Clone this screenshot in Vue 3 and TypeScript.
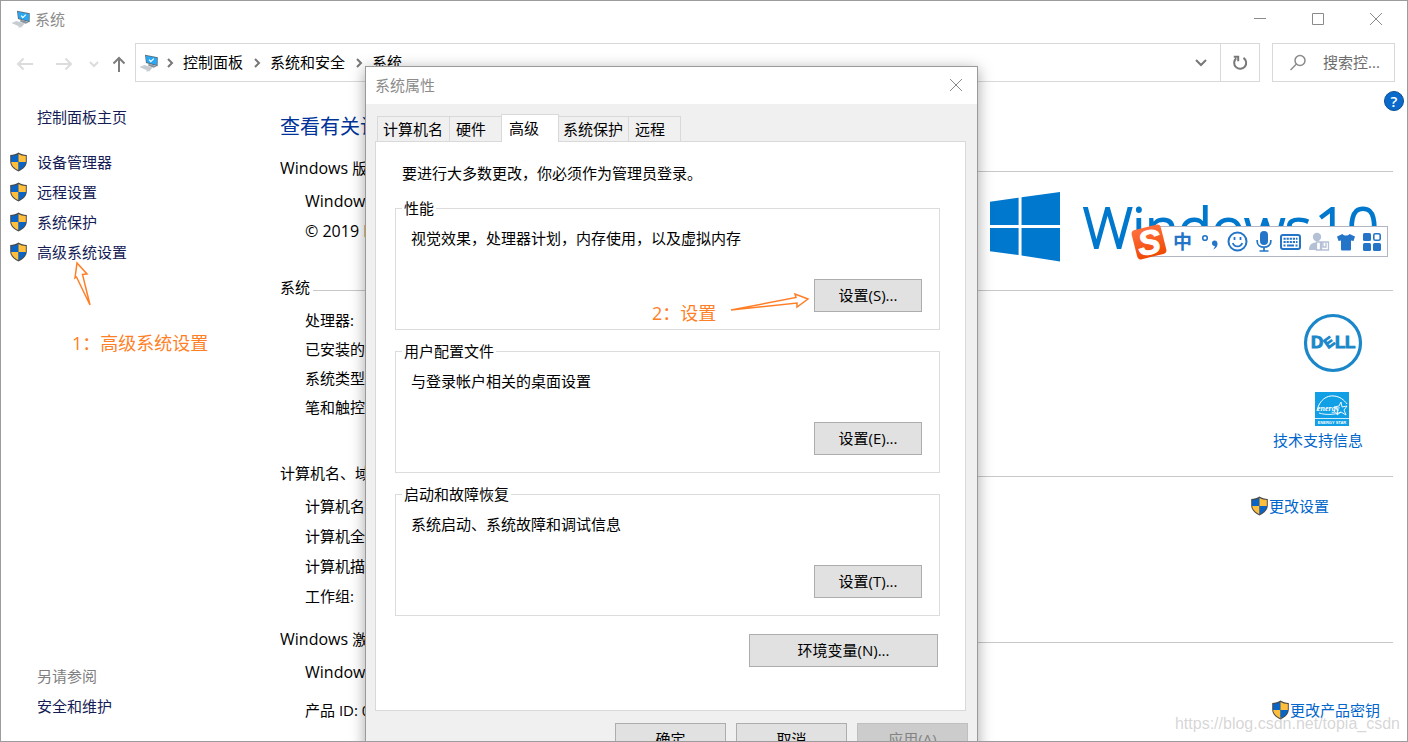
<script setup lang="ts">
import { ref } from 'vue'

interface Line {
  latin?: string
  text?: string
}

interface Section {
  id: string
  title: Line
  rows: Line[]
}

interface Group {
  title: string
  text: string
  button: string
}

const tasks: string[] = ['设备管理器', '远程设置', '系统保护', '高级系统设置']
const crumbs: string[] = ['控制面板', '系统和安全', '系统']

const sections: Section[] = [
  {
    id: 'edition',
    title: { latin: 'Windows ', text: '版本' },
    rows: [{ latin: 'Windows 10' }, { latin: '© 2019 Microsoft' }],
  },
  {
    id: 'system',
    title: { text: '系统' },
    rows: [{ text: '处理器:' }, { text: '已安装的内存' }, { text: '系统类型:' }, { text: '笔和触控:' }],
  },
  {
    id: 'name',
    title: { text: '计算机名、域' },
    rows: [{ text: '计算机名:' }, { text: '计算机全名:' }, { text: '计算机描述:' }, { text: '工作组:' }],
  },
  {
    id: 'activation',
    title: { latin: 'Windows ', text: '激活' },
    rows: [{ latin: 'Windows ', text: '已激活' }, { text: '产品 ID: 00' }],
  },
]

const tabs: string[] = ['计算机名', '硬件', '高级', '系统保护', '远程']
const activeTab = ref<string>('高级')

const groups: Group[] = [
  { title: '性能', text: '视觉效果，处理器计划，内存使用，以及虚拟内存', button: '设置(S)...' },
  { title: '用户配置文件', text: '与登录帐户相关的桌面设置', button: '设置(E)...' },
  { title: '启动和故障恢复', text: '系统启动、系统故障和调试信息', button: '设置(T)...' },
]

const query = ref<string>('')
</script>

<template>
  <div class="screen" lang="zh-CN">
    <svg class="defs" width="0" height="0" aria-hidden="true">
      <symbol id="shield" viewBox="0 0 18 20">
        <path d="M9 .6C6.700 2 3.800 2.900.7 3v6.200c0 4.700 3.300 7.900 8.300 10.200 5-2.300 8.300-5.500 8.300-10.200V3C14.200 2.900 11.300 2 9 .6z" fill="#4a4a4a" />
        <path d="M9 1.900v8H1.700V4C4.500 3.800 7 3.100 9 1.900z" fill="#0a64c4" />
        <path d="M9 1.900v8h7.300V4C13.500 3.800 11 3.100 9 1.900z" fill="#ffbf3d" />
        <path d="M9 9.900v8.300c-4.200-2-7-4.700-7.300-8.300z" fill="#ffbf3d" />
        <path d="M9 9.900v8.300c4.200-2 7-4.700 7.300-8.300z" fill="#0a64c4" />
      </symbol>
      <symbol id="computer" viewBox="0 0 20 18">
        <path d="M6 .8l12.800 2.400-.2 9L7 9z" fill="#5d6b78" />
        <path d="M6.800 1.700L18 3.900l-.2 7.200L7.700 8.200z" fill="#29a8f3" />
        <path d="M10.200 5.600l1.600 2 3-3" fill="none" stroke="#fff" stroke-width="1.200" />
        <path d="M9.500 9.800l4.500 1.300 3.800 1.400-3.200 1.200-5.400-2z" fill="#8a949c" />
        <path d="M.5 12.900l5-1.900 8 2.500-3 3.700-3.400.2.600-1.200z" fill="#c9ced3" />
        <path d="M1.500 13l10 2M4 12l8.500 2.200" stroke="#c0c5ca" stroke-width=".3" />
      </symbol>
    </svg>

    <header class="titlebar">
      <svg class="app-icon"><use href="#computer" /></svg>
      <span class="window-title">系统</span>
      <div class="window-buttons">
        <button type="button" aria-label="最小化">
          <svg width="14" height="14" viewBox="0 0 14 14"><path d="M1 6.500h12" /></svg>
        </button>
        <button type="button" aria-label="最大化">
          <svg width="14" height="14" viewBox="0 0 14 14"><path d="M1.500 1.500h11v11h-11z" /></svg>
        </button>
        <button type="button" aria-label="关闭">
          <svg width="14" height="14" viewBox="0 0 14 14"><path d="M1 1l12 12M13 1L1 13" /></svg>
        </button>
      </div>
    </header>

    <nav class="toolbar" aria-label="导航">
      <div class="history">
        <button type="button" class="faint" aria-label="后退">
          <svg width="18" height="14" viewBox="0 0 18 14"><path d="M17 7H2M7.500 1.500L2 7l5.500 5.500" /></svg>
        </button>
        <button type="button" class="faint forward" aria-label="前进">
          <svg width="18" height="14" viewBox="0 0 18 14"><path d="M1 7h15M10.500 1.500L16 7l-5.500 5.500" /></svg>
        </button>
        <button type="button" class="faint recent" aria-label="最近位置">
          <svg width="10" height="8" viewBox="0 0 10 8"><path d="M1 2l4 4 4-4" /></svg>
        </button>
        <button type="button" class="up" aria-label="向上">
          <svg width="14" height="18" viewBox="0 0 14 18"><path d="M7 17V3M1.500 8.500L7 3l5.500 5.500" /></svg>
        </button>
      </div>
      <div class="address">
        <svg class="app-icon"><use href="#computer" /></svg>
        <template v-for="c in crumbs" :key="c">
          <svg class="sep" width="8" height="10" viewBox="0 0 8 10"><path d="M2 1l4 4-4 4" /></svg>
          <a href="#">{{ c }}</a>
        </template>
        <button type="button" class="drop" aria-label="历史记录">
          <svg width="12" height="8" viewBox="0 0 12 8"><path d="M1 1l5 5 5-5" /></svg>
        </button>
        <button type="button" class="refresh" aria-label="刷新">
          <svg width="16" height="16" viewBox="0 0 16 16"><path d="M11.500 2.800A6 6 0 1 1 4.200 3.300M1.800 1.800h4.400v4.400" /></svg>
        </button>
      </div>
      <label class="search">
        <svg width="18" height="18" viewBox="0 0 18 18"><circle cx="11" cy="6.500" r="5" /><path d="M7.500 10L1.500 16" /></svg>
        <input v-model="query" type="text" placeholder="搜索控..." aria-label="搜索控制面板" />
      </label>
    </nav>

    <div class="body">
      <aside class="side">
        <a class="home" href="#">控制面板主页</a>
        <a v-for="t in tasks" :key="t" class="task" href="#">
          <svg class="shield"><use href="#shield" /></svg>{{ t }}
        </a>
        <div class="see-also">
          <span>另请参阅</span>
          <a href="#">安全和维护</a>
        </div>
      </aside>

      <main class="content">
        <h1>查看有关计算机</h1>
        <section v-for="s in sections" :key="s.id" :class="s.id">
          <h2><span><span class="latin">{{ s.title.latin }}</span>{{ s.title.text }}</span></h2>
          <div class="section-body">
            <ul>
              <li v-for="(r, i) in s.rows" :key="i"><span class="latin">{{ r.latin }}</span>{{ r.text }}</li>
            </ul>
            <div v-if="s.id === 'edition'" class="brand">
              <svg width="70" height="71" viewBox="0 0 71 71">
                <path d="M0 10.500L29 6.300V34H0zM32 5.800L71 .4V34H32zM0 37h29v27.500L0 60.500zM32 37h39v34L32 65z" fill="#0078cd" />
              </svg>
              <span class="wordmark"><span>Windows</span><span>10</span></span>
            </div>
            <div v-else-if="s.id === 'system'" class="vendor">
              <svg width="60" height="60" viewBox="0 0 60 60" role="img" aria-label="Dell">
                <circle cx="30" cy="30" r="27.500" fill="none" stroke="#1b87c9" stroke-width="3.200" />
                <g class="dell">
                  <text x="8" y="35">D</text>
                  <text class="tilted" x="21" y="34" transform="rotate(-36 26 29)">E</text>
                  <text x="32" y="35">L</text>
                  <text x="42" y="35">L</text>
                </g>
              </svg>
              <svg class="star" width="34" height="34" viewBox="0 0 34 34">
                <path d="M0 0h34v34H0z" fill="#11a0e6" />
                <path d="M2 19C4 8 12 3 19 4c6 .5 10 4 13 8" fill="none" stroke="#fff" />
                <path d="M26 10l1 5 5-1-3 4 2 5-5-3-4 3 1-5-4-3 5-1zM4 21c6 2 16 2 22-1" fill="none" stroke="#fff" stroke-width=".9" />
                <text class="script" x="2" y="19">energy</text>
                <path d="M0 26.500h34" stroke="#fff" stroke-width=".8" />
                <text class="caption" x="17" y="32" text-anchor="middle">ENERGY STAR</text>
              </svg>
              <a href="#">技术支持信息</a>
            </div>
            <a v-else-if="s.id === 'name'" class="action" href="#">
              <svg class="shield"><use href="#shield" /></svg>更改设置
            </a>
            <a v-else class="action" href="#">
              <svg class="shield"><use href="#shield" /></svg>更改产品密钥
            </a>
          </div>
        </section>
      </main>
    </div>

    <button type="button" class="help" aria-label="帮助">?</button>

    <div class="ime">
      <svg class="sogou" width="38" height="38" viewBox="0 0 38 38">
        <defs>
          <linearGradient id="flame" x1="0" y1="0" x2="0" y2="1">
            <stop offset="0" stop-color="#ff6f3d" />
            <stop offset="1" stop-color="#f04a05" />
          </linearGradient>
        </defs>
        <rect x="4" y="4" width="30" height="30" rx="4" fill="url(#flame)" transform="rotate(-14 19 19)" />
        <text x="19" y="31" text-anchor="middle" transform="rotate(-8 19 19)">S</text>
      </svg>
      <button type="button" class="zh">中</button>
      <button type="button" aria-label="标点">
        <svg width="20" height="20" viewBox="0 0 20 20"><circle cx="5" cy="6" r="2.300" fill="none" stroke="#2475c8" stroke-width="1.600" /><path d="M14.500 8.500c2.300 0 3.500 1.800 2.900 4.500-.5 2.300-2 3.700-4.200 4.500 1.100-1.400 1.600-2.300 1.600-3.500-3.600.2-3.800-5.500-.3-5.500z" fill="#2475c8" /></svg>
      </button>
      <button type="button" aria-label="表情">
        <svg width="21" height="21" viewBox="0 0 21 21" fill="none" stroke="#2475c8" stroke-width="2"><circle cx="10.500" cy="10.500" r="9" /><path d="M5.800 12c1.500 4.600 7.900 4.600 9.400 0M7.500 6v3M13.500 6v3" stroke-width="1.800" /></svg>
      </button>
      <button type="button" aria-label="语音">
        <svg width="16" height="21" viewBox="0 0 16 21"><rect x="4" y="0" width="8" height="14" rx="4" fill="#2475c8" /><path d="M1.200 9v1.500c0 7.500 13.600 7.500 13.600 0V9M8 16v4M3.500 20h9" fill="none" stroke="#2475c8" stroke-width="1.700" /></svg>
      </button>
      <button type="button" aria-label="软键盘">
        <svg width="21" height="16" viewBox="0 0 21 16"><rect x="1" y="1" width="19" height="14" rx="2" fill="none" stroke="#2475c8" stroke-width="2" /><path d="M3.500 4.800h14M3.500 8h14" stroke="#2475c8" stroke-width="2" stroke-dasharray="2.200 .9" /><path d="M3.500 11.500h2M7 11.500h7M15.500 11.500h2" stroke="#2475c8" stroke-width="2" /></svg>
      </button>
      <button type="button" aria-label="用户">
        <svg width="21" height="20" viewBox="0 0 21 20"><circle cx="8" cy="5" r="4.200" fill="#b4c0d6" /><path d="M0 18c0-5 2-7.500 8-7.500V18z" fill="#b4c0d6" /><path d="M7.500 10h4v8h-4zM12.500 10h7v8h-7zM14 10v5h3v-4" fill="#fff" stroke="#b4c0d6" stroke-width="1.300" /></svg>
      </button>
      <button type="button" aria-label="皮肤">
        <svg width="18" height="18" viewBox="0 0 18 18"><path d="M5.500 1c1.500 2 5.500 2 7 0L18 3.500 16.500 8 14 7.500V16c0 1-.5 1.500-1.500 1.500h-7C4.500 17.500 4 17 4 16V7.500L1.500 8 0 3.500z" fill="#2475c8" /></svg>
      </button>
      <button type="button" aria-label="工具箱">
        <svg width="18" height="18" viewBox="0 0 18 18"><rect width="8" height="8" rx="1.500" fill="#2475c8" /><rect y="10" width="8" height="8" rx="1.500" fill="#2475c8" /><rect x="10" y="10" width="8" height="8" rx="1.500" fill="#2475c8" /><rect x="10.800" y=".8" width="6.400" height="6.400" rx="1.500" fill="none" stroke="#2475c8" stroke-width="1.600" /></svg>
      </button>
    </div>

    <div class="dialog" role="dialog" aria-labelledby="dialog-title">
      <header>
        <span id="dialog-title">系统属性</span>
        <button type="button" aria-label="关闭对话框">
          <svg width="14" height="14" viewBox="0 0 14 14"><path d="M1 1l12 12M13 1L1 13" /></svg>
        </button>
      </header>
      <div class="tabs" role="tablist">
        <button
          v-for="t in tabs"
          :key="t"
          type="button"
          role="tab"
          :aria-selected="t === activeTab"
          :class="{ active: t === activeTab }"
          @click="activeTab = t"
        >{{ t }}</button>
      </div>
      <div class="panel" role="tabpanel">
        <p class="intro">要进行大多数更改，你必须作为管理员登录。</p>
        <fieldset v-for="g in groups" :key="g.title">
          <legend>{{ g.title }}</legend>
          <p>{{ g.text }}</p>
          <button type="button" class="push">{{ g.button }}</button>
        </fieldset>
        <button type="button" class="push env">环境变量(N)...</button>
      </div>
      <footer>
        <button type="button" class="push">确定</button>
        <button type="button" class="push">取消</button>
        <button type="button" class="push" disabled>应用(A)</button>
      </footer>
    </div>

    <div class="note first">
      <svg width="18" height="48" viewBox="0 0 18 48"><path d="M16 44L2.500 16 1 17 3 2l10 11-4.500.5z" /></svg>
      <span>1：高级系统设置</span>
    </div>
    <div class="note second">
      <span>2：设置</span>
      <svg width="82" height="20" viewBox="0 0 82 20"><path d="M2 17L67 4.500 66 1l13 5-11 8v-4z" /></svg>
    </div>

    <div class="watermark">https://blog.csdn.net/topia_csdn</div>
  </div>
</template>

<style>
body {
  margin: 0;
  background: #fff;
}
</style>

<style scoped>
.screen {
  position: relative;
  box-sizing: border-box;
  min-height: 100vh;
  overflow: hidden;
  display: flex;
  flex-direction: column;
  border: 1px solid #9c9c9c;
  background: #fff;
  color: #000;
  font: 15px/20px "Open Sans", "Noto Sans CJK SC", sans-serif;
}
.defs {
  position: absolute;
}
button {
  margin: 0;
  padding: 0;
  border: 0;
  background: none;
  font: inherit;
  color: inherit;
}
button svg {
  display: block;
}
a {
  color: #0066cc;
  text-decoration: none;
}
h1,
h2,
p,
ul {
  margin: 0;
  padding: 0;
  font-weight: 400;
  list-style: none;
}
.app-icon {
  flex: none;
  width: 20px;
  height: 18px;
}
.shield {
  flex: none;
  width: 19px;
  height: 20px;
}

.titlebar {
  display: flex;
  align-items: center;
  height: 36px;
  padding: 0 2px 0 10px;
  color: #8c8c8c;
}
.window-title {
  margin-left: 4px;
}
.window-buttons {
  display: flex;
  margin-left: auto;
}
.window-buttons button {
  display: grid;
  place-items: center;
  width: 58px;
  height: 36px;
}
.window-buttons svg,
.dialog header svg {
  fill: none;
  stroke: #8a8a8a;
}

.toolbar {
  display: flex;
  align-items: stretch;
  height: 39px;
  margin-top: 6px;
  padding-right: 12px;
}
.history {
  display: flex;
  align-items: center;
  box-sizing: border-box;
  width: 134px;
  padding: 2px 9px 0 15px;
}
.history svg {
  fill: none;
  stroke: #7d7d7d;
  stroke-width: 2;
}
.history .faint svg {
  stroke: #dcdcdc;
}
.forward {
  margin-left: 21px;
}
.recent {
  margin-left: 16px;
}
.up {
  margin-left: auto;
}
.address {
  flex: 1;
  display: flex;
  align-items: center;
  border: 1px solid #d9d9d9;
  padding-left: 3px;
}
.address a {
  padding-bottom: 2px;
  color: #000;
}
.address svg {
  stroke-width: 2;
}
.sep {
  margin: 0 9px 0 7px;
  fill: none;
  stroke: #777;
}
a + .sep {
  margin-left: 10px;
}
.drop,
.refresh {
  display: grid;
  place-items: center;
  align-self: stretch;
  width: 39px;
  fill: none;
  stroke: #777;
}
.drop {
  margin-left: auto;
}
.refresh {
  border-left: 1px solid #d9d9d9;
}
.search {
  display: flex;
  align-items: center;
  box-sizing: border-box;
  width: 123px;
  margin-left: 12px;
  padding-left: 16px;
  border: 1px solid #d9d9d9;
}
.search svg {
  flex: none;
  fill: none;
  stroke: #8a8a8a;
  stroke-width: 1.500;
}
.search input {
  flex: 1;
  min-width: 0;
  margin-left: 16px;
  padding: 0 0 2px;
  border: 0;
  outline: 0;
  background: none;
  font: inherit;
}
.search input::placeholder {
  color: #6d6d6d;
  opacity: 1;
}

.body {
  flex: 1;
  display: flex;
}
.side {
  display: flex;
  flex-direction: column;
  box-sizing: border-box;
  width: 279px;
  padding: 20px 0 20px 8px;
  line-height: 30px;
}
.side a {
  color: #151c55;
}
.home {
  margin: 0 0 15px 28px;
}
.task {
  display: flex;
  align-items: center;
  gap: 9px;
}
.see-also {
  display: flex;
  flex-direction: column;
  margin: auto 0 0 28px;
  color: #7f7f7f;
}
.content {
  flex: 1;
  padding: 31px 14px 0 0;
}
h1 {
  font-size: 20px;
  line-height: 28px;
  color: #003399;
}
h2 {
  display: flex;
  align-items: center;
  gap: 3px;
  font-size: 15px;
  line-height: 24px;
}
h2::after {
  content: "";
  flex: 1;
  height: 1px;
  margin-top: 6px;
  background: #c8c8c8;
}
.latin {
  font-size: 16px;
  line-height: 16px;
}
.section-body {
  display: flex;
  justify-content: space-between;
  padding-left: 25px;
}
.edition {
  margin-top: 15px;
}
.edition .section-body {
  padding-top: 6px;
}
.edition li {
  line-height: 30px;
}
.brand {
  display: flex;
  align-items: center;
  gap: 23px;
  margin-right: 14px;
  padding: 5px 0 13px;
}
.wordmark {
  display: flex;
  gap: 4px;
  color: #0078cd;
  font-size: 56px;
  font-weight: 300;
  line-height: 71px;
  -webkit-text-stroke: 2px #0078cd;
}
.system .section-body {
  padding-top: 7px;
}
.system li {
  line-height: 29px;
}
.vendor {
  display: flex;
  flex-direction: column;
  align-items: flex-end;
  padding: 7px 30px 11px 0;
}
.star {
  margin: 19px 14px 4px 0;
}
.dell {
  fill: #1b87c9;
  stroke: #1b87c9;
  stroke-width: 1;
  font: bold 17px "Liberation Sans", sans-serif;
}
.tilted {
  font-size: 14px;
}
.script {
  fill: #fff;
  font: italic bold 8px "Liberation Serif", serif;
}
.caption {
  fill: #fff;
  font: bold 4px "Liberation Sans", sans-serif;
}
.name .section-body {
  padding-top: 6px;
}
.name li {
  line-height: 30px;
}
.action {
  display: flex;
  align-items: center;
  align-self: flex-start;
  line-height: 30px;
}
.name .action {
  margin-right: 64px;
}
.activation {
  margin-top: 16px;
}
.activation .section-body {
  padding-top: 2px;
}
.activation li {
  line-height: 38px;
}
.activation .action {
  align-self: flex-end;
  margin-right: 13px;
  line-height: 38px;
}

.help {
  position: absolute;
  top: 90px;
  right: 3px;
  box-sizing: border-box;
  width: 20px;
  height: 20px;
  border: 1px solid #0a4f90;
  border-radius: 50%;
  background: #0a6acb;
  color: #fff;
  font-weight: 600;
  line-height: 18px;
}

.ime {
  position: absolute;
  top: 225px;
  right: 19px;
  display: flex;
  align-items: center;
  justify-content: space-between;
  box-sizing: border-box;
  width: 238px;
  height: 31px;
  padding: 0 6px 0 22px;
  border: 1px solid #b3b6c2;
  background: #fff;
}
.sogou {
  position: absolute;
  left: -21px;
  top: -4px;
}
.sogou text {
  fill: #fff;
  stroke: #fff;
  stroke-width: 1;
  font: italic bold 34px "Liberation Sans", sans-serif;
}
.zh {
  color: #2475c8;
  font-size: 19px;
  font-weight: 700;
}

.dialog {
  position: absolute;
  left: 364px;
  top: 65px;
  box-sizing: border-box;
  width: 613px;
  padding-bottom: 12px;
  border: 1px solid #9a9a9a;
  background: #f0f0f0;
  box-shadow: 0 3px 14px rgba(0, 0, 0, 0.35);
}
.dialog header {
  display: flex;
  align-items: center;
  justify-content: space-between;
  box-sizing: border-box;
  height: 37px;
  padding: 0 14px 1px 9px;
  background: #fff;
  color: #8c8c8c;
}
.tabs {
  display: flex;
  align-items: flex-end;
  height: 37px;
  padding-left: 11px;
}
.tabs button {
  box-sizing: border-box;
  height: 25px;
  padding: 0 6px 0 5px;
  border: 1px solid #d9d9d9;
  border-width: 1px 0 0 1px;
  line-height: 24px;
}
.tabs button:nth-child(2) {
  padding: 0 15px 0 6px;
}
.tabs button:nth-child(4) {
  padding: 0 5px 0 4px;
  border-left: 0;
}
.tabs button:nth-child(5) {
  padding: 0 15px 0 6px;
  border-right-width: 1px;
}
.tabs button.active {
  position: relative;
  height: 28px;
  margin-bottom: -1px;
  padding: 0 19px 2px 7px;
  border-width: 1px 1px 0;
  background: #fff;
}
.panel {
  margin: 0 11px 0 9px;
  padding: 21px 25px 43px 19px;
  border: 1px solid #d9d9d9;
  background: #fff;
  display: flex;
  flex-direction: column;
}
.intro {
  margin: 0 0 15px 7px;
}
fieldset {
  display: flex;
  flex-direction: column;
  margin: 0 0 11px;
  padding: 10px 17px 17px 15px;
  border: 1px solid #dcdcdc;
}
legend {
  margin-left: -9px;
  padding: 0 2px;
}
.push {
  box-sizing: border-box;
  height: 33px;
  padding-bottom: 2px;
  border: 1px solid #adadad;
  background: #e1e1e1;
}
fieldset .push {
  display: block;
  width: 108px;
  margin: 31px 0 0 auto;
}
.env {
  width: 189px;
  margin: 7px 2px 0 auto;
}
.dialog footer {
  display: flex;
  justify-content: flex-end;
  gap: 10px;
  padding: 12px 9px 0 0;
}
.dialog footer .push {
  width: 111px;
}
.push:disabled {
  border-color: #bfbfbf;
  background: #cccccc;
  color: #838383;
}

.note {
  position: absolute;
  color: #ff7f27;
  font-size: 18px;
  line-height: 24px;
}
.note svg {
  display: block;
  fill: none;
  stroke: #ff7f27;
  stroke-width: 1.500;
}
.first {
  left: 71px;
  top: 260px;
}
.first svg {
  margin: 0 0 22px 2px;
}
.second {
  display: flex;
  gap: 13px;
  left: 651px;
  top: 292px;
}
.second span {
  padding-top: 8px;
}
.watermark {
  position: absolute;
  right: 7px;
  bottom: 7px;
  color: rgba(150, 150, 150, 0.4);
  font: 16px/20px "Liberation Sans", sans-serif;
}
</style>
